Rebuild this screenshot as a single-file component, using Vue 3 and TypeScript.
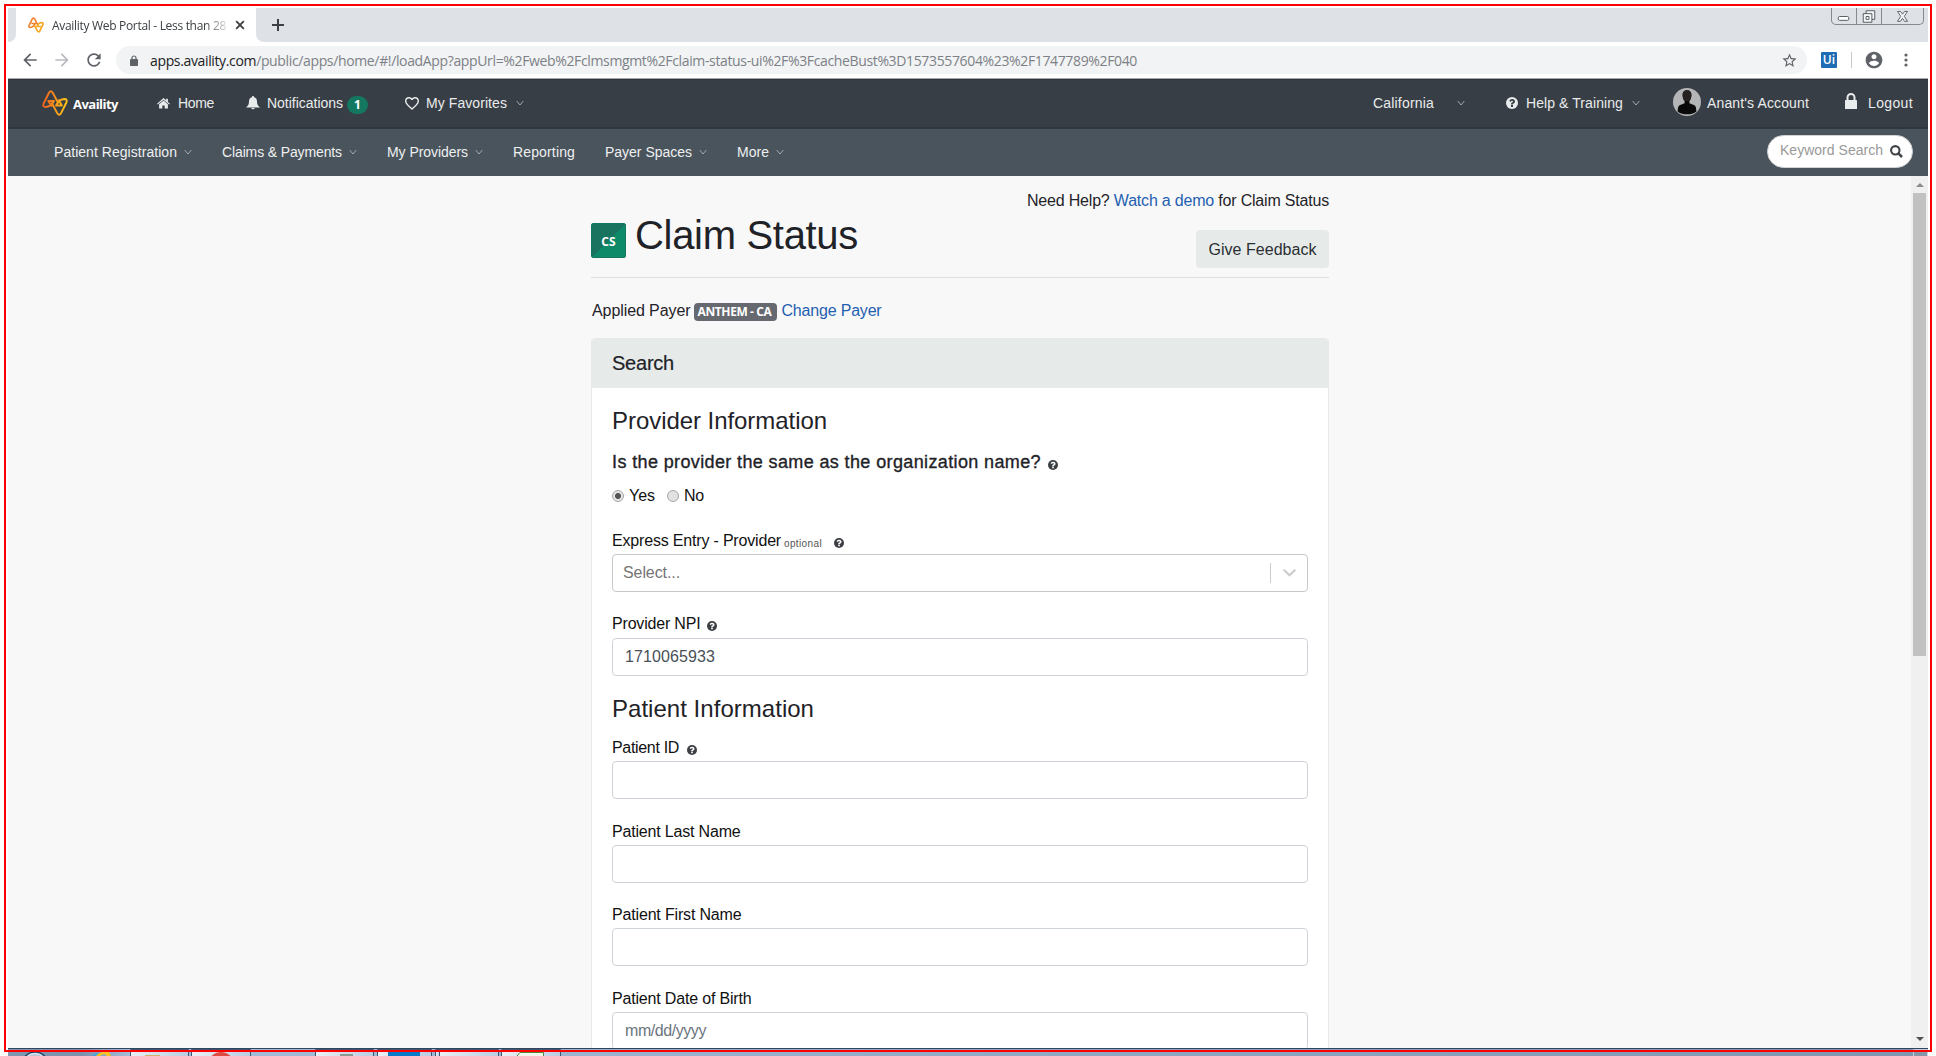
<script setup lang="ts">
import { ref } from 'vue'

interface NavItem {
  label: string
  width: number
  menu: boolean
}

interface Field {
  id: string
  label: string
  width: number
  gap: number
  placeholder?: string
  help?: boolean
}

const navItems: NavItem[] = [
  { label: 'Patient Registration', width: 123, menu: true },
  { label: 'Claims & Payments', width: 120, menu: true },
  { label: 'My Providers', width: 81, menu: true },
  { label: 'Reporting', width: 62, menu: false },
  { label: 'Payer Spaces', width: 87, menu: true },
  { label: 'More', width: 32, menu: true },
]

const patientFields: Field[] = [
  { id: 'pid', label: 'Patient ID', width: 67, gap: 13, help: true },
  { id: 'last', label: 'Patient Last Name', width: 128.5, gap: 21 },
  { id: 'first', label: 'Patient First Name', width: 129.5, gap: 20 },
  { id: 'dob', label: 'Patient Date of Birth', width: 139.5, gap: 21, placeholder: 'mm/dd/yyyy' },
]

const sameOrg = ref<'yes' | 'no'>('yes')

// Spreads a label's letters so that it fills the given width.
const vFit = {
  mounted(el: HTMLElement, binding: { value: number }) {
    const count = (el.textContent ?? '').trim().length
    const natural = el.getBoundingClientRect().width
    el.style.letterSpacing = `${((binding.value - natural) / count).toFixed(3)}px`
  },
}

const question =
  'M896 1376v-192q0-14-9-23t-23-9H672q-14 0-23 9t-9 23v192q0 14 9 23t23 9h192q14 0 23-9t9-23zM1152 704q0-88-55.500-163T958 425t-170-41q-243 0-371 213-15 24 8 42l132 100q7 6 19 6 16 0 25-12 53-68 86-92 34-24 86-24 48 0 85.500 26t37.500 59q0 38-20 61t-68 45q-63 28-115.500 86.500T640 1020v36q0 14 9 23t23 9h192q14 0 23-9t9-23q0-19 21.500-49.500T972 957q32-18 49-28.500t46-35 44.500-48 28-60.500 12.500-81z'
</script>

<template>
  <div class="screen">
    <div class="window">
      <div class="tabs">
        <div class="tab-lead"></div>
        <div class="tab">
          <svg class="favicon" viewBox="0 0 26 26" fill="none" stroke-width="2.6" stroke-linejoin="round">
            <path d="M4 17Q.5 17 1.800 13.500L7 3Q8.800 .4 10.800 3L16 13M4 17Q9 16.500 12 10.500H5.500" stroke="#f0812c" />
            <path d="M10 13L15.500 23Q17.200 25.400 19 23L24.300 12.500Q25.400 9 22 9Q17 9.500 14.500 15.500H21" stroke="#f6a51f" />
          </svg>
          <span class="tab-title"><span v-fit="174">Availity Web Portal - Less than 28</span></span>
          <svg class="tab-x" viewBox="0 0 10 10"><path d="M1.200 1.200l7.600 7.600M8.800 1.200L1.200 8.800" stroke="#3c4043" stroke-width="1.900" /></svg>
        </div>
        <div class="tab-rest">
          <svg class="plus" viewBox="0 0 12 12"><path d="M6 0v12M0 6h12" stroke="#3c4043" stroke-width="2" /></svg>
          <div class="controls">
            <svg viewBox="0 0 25 17" width="25"><rect x="6.500" y="8.500" width="11" height="4" rx="1.500" fill="#fff" stroke="#555a60" /></svg>
            <svg viewBox="0 0 25 17" width="25" fill="#f4f5f6" stroke="#555a60"><path d="M9.500 2.500h9v9h-9z" /><path d="M6.500 5.500h9v9h-9z" /><path d="M9.500 8.500h3v3h-3z" fill="#fff" /></svg>
            <svg viewBox="0 0 41 17" width="41"><path d="M15.500 3.500h3l2 2.700 2-2.700h3l-3.200 4.800 3.200 5h-3l-2-3-2 3h-3l3.200-5z" fill="#f4f5f6" stroke="#555a60" stroke-width=".9" /></svg>
          </div>
        </div>
      </div>

      <div class="toolbar">
        <svg class="i20 back" viewBox="0 0 24 24" fill="#5f6368"><path d="M20 11H7.830l5.590-5.590L12 4l-8 8 8 8 1.410-1.410L7.830 13H20v-2z" /></svg>
        <svg class="i20 forward" viewBox="0 0 24 24" fill="#b9bbbe"><path d="M4 13h12.170l-5.590 5.590L12 20l8-8-8-8-1.410 1.410L16.170 11H4v2z" /></svg>
        <svg class="i20 reload" viewBox="0 0 24 24" fill="#5f6368"><path d="M17.650 6.350C16.200 4.900 14.210 4 12 4c-4.420 0-7.990 3.580-7.990 8s3.570 8 7.990 8c3.730 0 6.840-2.550 7.730-6h-2.080c-.82 2.330-3.040 4-5.650 4-3.310 0-6-2.690-6-6s2.690-6 6-6c1.660 0 3.140.69 4.220 1.780L13 11h7V4l-2.350 2.350z" /></svg>
        <div class="omnibox">
          <svg class="url-lock" viewBox="0 0 8 11"><path d="M2 5V3a2 2 0 0 1 4 0v2" fill="none" stroke="#5f6368" stroke-width="1.200" /><rect y="4" width="8" height="7" rx=".8" fill="#5f6368" /></svg>
          <span class="url" v-fit="987"><b>apps.availity.com</b>/public/apps/home/#!/loadApp?appUrl=%2Fweb%2Fclmsmgmt%2Fclaim-status-ui%2F%3FcacheBust%3D1573557604%23%2F1747789%2F040</span>
          <svg class="star" viewBox="0 0 24 24" fill="#5f6368"><path d="M22 9.240l-7.190-.62L12 2 9.190 8.630 2 9.240l5.460 4.730L5.820 21 12 17.270 18.180 21l-1.630-7.030L22 9.240zM12 15.400l-3.760 2.270 1-4.280-3.320-2.880 4.380-.38L12 6.100l1.710 4.040 4.380.38-3.320 2.880 1 4.280L12 15.400z" /></svg>
        </div>
        <span class="ui">Ui</span>
        <span class="bar-sep"></span>
        <svg class="i20 account" viewBox="0 0 24 24" fill="#5f6368"><path d="M12 2C6.480 2 2 6.480 2 12s4.480 10 10 10 10-4.480 10-10S17.520 2 12 2zm0 3c1.660 0 3 1.340 3 3s-1.340 3-3 3-3-1.340-3-3 1.340-3 3-3zm0 14.200c-2.500 0-4.710-1.280-6-3.220.03-1.990 4-3.080 6-3.080 1.990 0 5.970 1.090 6 3.080-1.290 1.940-3.500 3.220-6 3.220z" /></svg>
        <svg class="kebab" viewBox="0 0 4 14" fill="#5f6368"><circle cx="2" cy="2" r="1.600" /><circle cx="2" cy="7" r="1.600" /><circle cx="2" cy="12" r="1.600" /></svg>
      </div>

      <header class="top">
        <svg class="logo" viewBox="0 0 26 26" fill="none" stroke-width="1.900" stroke-linejoin="round">
          <defs>
            <linearGradient id="la" x1="0" x2="1"><stop offset="0" stop-color="#f0641e" /><stop offset="1" stop-color="#f79a1c" /></linearGradient>
            <linearGradient id="lb" x1="0" x2="1"><stop offset="0" stop-color="#f58a1c" /><stop offset="1" stop-color="#fcc416" /></linearGradient>
          </defs>
          <path d="M3.500 17Q.4 17 1.600 13.500L7 2.800Q8.800 -.2 10.700 2.800L16.500 13.500M3.500 17Q9 16.800 12 11H6.200L10 16.500" stroke="url(#la)" />
          <path d="M9.500 12.500L15.300 23.200Q17.200 26.200 19 23.200L24.400 12.500Q25.600 9 22.500 9Q17 9.200 14 15.500H19.800L16.500 9.500" stroke="url(#lb)" />
        </svg>
        <span class="brand"><span v-fit="45">Availity</span></span>
        <svg class="home" viewBox="0 0 14 12" fill="#e9ecec"><path d="M7 0L0 6.200l.8.9L7 1.800l6.200 5.300.8-.9-2.200-1.900V.8H9.900v1.700z" /><path d="M7 2.800L2.200 6.900V11.500H5.700V8.200h2.600v3.300h3.500V6.900z" /></svg>
        <span class="t" v-fit="36">Home</span>
        <svg class="bell" viewBox="0 0 14 14" fill="#e9ecec"><path d="M7 0a1 1 0 0 0-1 1.200C3.800 1.700 3 3.500 3 5.500 3 8.500 2 10 0 11.400h14C12 10 11 8.500 11 5.500c0-2-.8-3.800-3-4.300A1 1 0 0 0 7 0zM5.200 12a1.900 1.900 0 0 0 3.600 0z" /></svg>
        <span class="t" v-fit="76">Notifications</span>
        <span class="count">1</span>
        <svg class="heart" viewBox="2 3 20 18.400" fill="#e9ecec"><path d="M16.500 3c-1.740 0-3.410.81-4.500 2.090C10.910 3.810 9.240 3 7.500 3 4.420 3 2 5.420 2 8.500c0 3.780 3.400 6.860 8.550 11.540L12 21.350l1.450-1.320C18.600 15.360 22 12.280 22 8.500 22 5.420 19.580 3 16.500 3zm-4.400 15.550l-.1.100-.1-.100C7.140 14.240 4 11.390 4 8.500 4 6.500 5.500 5 7.500 5c1.540 0 3.040.99 3.570 2.360h1.870C13.460 5.990 14.960 5 16.500 5c2 0 3.500 1.500 3.500 3.500 0 2.890-3.140 5.740-7.900 10.050z" /></svg>
        <span class="t" v-fit="81">My Favorites</span>
        <svg class="chev" viewBox="0 0 8 6"><path d="M.7 1L4 5l3.300-4" /></svg>
        <div class="grow"></div>
        <span class="t" v-fit="61">California</span>
        <svg class="chev wide" viewBox="0 0 8 6"><path d="M.7 1L4 5l3.300-4" /></svg>
        <svg class="help-top" viewBox="0 0 1536 1536"><circle cx="768" cy="768" r="768" fill="#e9ecec" /><path :d="question" transform="translate(0 -128)" fill="#383e45" /></svg>
        <span class="t" v-fit="97">Help &amp; Training</span>
        <svg class="chev" viewBox="0 0 8 6"><path d="M.7 1L4 5l3.300-4" /></svg>
        <svg class="avatar" viewBox="0 0 28 28"><circle cx="14" cy="14" r="14" fill="#b4b5b6" /><path d="M14 2.300c3 0 4.600 2 4.400 5-.1 2.500-1 4.600-2 5.800v2.200l5.100 2c1.400.7 1.800 3.500 1.900 6.200C20.500 26 17.500 26.200 14 26.200S7.500 26 4.600 23.500c.1-2.700.5-5.500 1.900-6.200l5.100-2v-2.200c-1-1.200-1.900-3.300-2-5.800-.2-3 1.400-5 4.400-5z" fill="#0b0a0b" /><path d="M14 2.300c3 0 4.600 2 4.400 5-.1 2.500-1 4.600-2 5.800h-4.800c-1-1.200-1.900-3.300-2-5.800-.2-3 1.400-5 4.400-5z" fill="#262021" /></svg>
        <span class="t" v-fit="102">Anant's Account</span>
        <svg class="lock" viewBox="0 0 12 16"><path d="M2.500 8V4.500a3.500 3.500 0 0 1 7 0V8" fill="none" stroke="#e9ecec" stroke-width="2" /><rect y="7" width="12" height="9" rx=".6" fill="#e9ecec" /></svg>
        <span class="t last" v-fit="45">Logout</span>
      </header>

      <nav class="nav">
        <div v-for="n in navItems" :key="n.label" class="nav-item">
          <span class="t" v-fit="n.width">{{ n.label }}</span>
          <svg v-if="n.menu" class="chev" viewBox="0 0 8 6"><path d="M.7 1L4 5l3.300-4" /></svg>
        </div>
        <div class="grow"></div>
        <div class="search">
          <span v-fit="103">Keyword Search</span>
          <svg viewBox="0 0 13 13"><circle cx="5.300" cy="5.300" r="4.200" fill="none" stroke="#3f4347" stroke-width="2.100" /><path d="M8.400 8.400l3.600 3.600" stroke="#3f4347" stroke-width="2.500" /></svg>
        </div>
      </nav>

      <div class="body">
        <main class="main">
          <p class="demo"><span v-fit="302">Need Help? <a>Watch a demo</a> for Claim Status</span></p>
          <div class="title-row">
            <span class="cs">CS</span>
            <h1><span v-fit="223">Claim Status</span></h1>
            <button class="feedback"><span v-fit="108">Give Feedback</span></button>
          </div>
          <p class="payer">
            <span v-fit="98.500">Applied Payer</span>
            <span class="tag"><span v-fit="74">ANTHEM - CA</span></span>
            <a v-fit="100">Change Payer</a>
          </p>

          <section class="card">
            <div class="card-head"><span v-fit="62">Search</span></div>
            <div class="card-body">
              <h2><span v-fit="215">Provider Information</span></h2>
              <div class="question">
                <span v-fit="429">Is the provider the same as the organization name?</span>
                <svg class="help q" viewBox="0 0 1536 1536"><circle cx="768" cy="768" r="768" /><path :d="question" transform="translate(0 -128)" fill="#fff" /></svg>
              </div>
              <div class="radios">
                <i class="radio" :class="{ on: sameOrg === 'yes' }" @click="sameOrg = 'yes'"></i><span class="yes" v-fit="26">Yes</span>
                <i class="radio" :class="{ on: sameOrg === 'no' }" @click="sameOrg = 'no'"></i><span v-fit="20">No</span>
              </div>
              <label class="label express">
                <span v-fit="169">Express Entry - Provider</span>
                <small v-fit="38">optional</small>
                <svg class="help" viewBox="0 0 1536 1536"><circle cx="768" cy="768" r="768" /><path :d="question" transform="translate(0 -128)" fill="#fff" /></svg>
              </label>
              <div class="select">
                <span v-fit="57">Select...</span>
                <i></i>
                <svg viewBox="0 0 13 8"><path d="M1.300 1.300l5.200 4.900 5.200-4.900" fill="none" stroke="#ccc" stroke-width="2.200" stroke-linecap="round" /></svg>
              </div>
              <label class="label npi">
                <span v-fit="88.500">Provider NPI</span>
                <svg class="help" viewBox="0 0 1536 1536"><circle cx="768" cy="768" r="768" /><path :d="question" transform="translate(0 -128)" fill="#fff" /></svg>
              </label>
              <div class="input"><span v-fit="90">1710065933</span></div>
              <h2 class="patient"><span v-fit="202">Patient Information</span></h2>
              <div v-for="f in patientFields" :key="f.id" class="field" :style="{ paddingTop: f.gap + 'px' }">
                <label class="label">
                  <span v-fit="f.width">{{ f.label }}</span>
                  <svg v-if="f.help" class="help" viewBox="0 0 1536 1536"><circle cx="768" cy="768" r="768" /><path :d="question" transform="translate(0 -128)" fill="#fff" /></svg>
                </label>
                <div class="input"><span v-if="f.placeholder" class="ph" v-fit="81">{{ f.placeholder }}</span></div>
              </div>
            </div>
          </section>
        </main>
        <div class="scrollbar">
          <i class="arrow up"></i>
          <i class="thumb"></i>
          <i class="arrow down"></i>
        </div>
      </div>

      <div class="taskbar">
        <svg viewBox="8 1049 1920 7" width="1920" height="7">
          <defs>
            <linearGradient id="tb" x1="0" x2="1"><stop offset="0" stop-color="#7f97b0" /><stop offset=".6" stop-color="#7d91ab" /><stop offset="1" stop-color="#a3bdda" /></linearGradient>
            <linearGradient id="tr" x1="0" x2="1"><stop offset="0" stop-color="#a5c0de" /><stop offset="1" stop-color="#8095b0" /></linearGradient>
            <linearGradient id="bt" x1="0" x2="1"><stop offset="0" stop-color="#eaf0f6" /><stop offset="1" stop-color="#b9cce2" /></linearGradient>
          </defs>
          <path d="M8 1049h1920v7H8z" fill="url(#tr)" />
          <path d="M8 1049h122v7H8z" fill="url(#tb)" />
          <circle cx="35" cy="1065" r="13" fill="#b5c8d8" stroke="#24466b" stroke-width="1.400" />
          <circle cx="35" cy="1065" r="11.500" fill="none" stroke="#e9f2f8" />
          <path d="M95 1056q6-5 14-4l2 4h-4l-2-2q-3 0-5 2z" fill="#fbc31d" />
          <path d="M91 1056q4-3 9-4l-4 4z" fill="#4aa0dc" />
          <g fill="url(#bt)" stroke="#3e5570">
            <path d="M130.500 1049.500h58v8h-58z" /><path d="M191.500 1049.500h59v8h-59z" /><path d="M315.500 1049.500h58v8h-58z" /><path d="M377.500 1049.500h54v8h-54z" /><path d="M435.500 1049.500h4v8h-4z" /><path d="M439.500 1049.500h59v8h-59z" /><path d="M501.500 1049.500h59v8h-59z" />
          </g>
          <path d="M145 1055h15v1h-15z" fill="#d1b36a" />
          <circle cx="221" cy="1065" r="13" fill="#df4b40" />
          <path d="M340 1054h13v2h-13z" fill="#8d9a90" />
          <path d="M388 1052h32v4h-32z" fill="#0a79c8" />
          <path d="M517 1056l3-3.500h23.500v4" fill="#f2f7ee" stroke="#4c8a3c" />
          <path d="M1913.500 1049.500h14v8h-14z" fill="#8795a8" stroke="#c6cfda" />
        </svg>
      </div>
    </div>
    <div class="frame"></div>
  </div>
</template>

<style>
html, body { margin: 0; background: #fff; overflow: hidden; }
</style>

<style scoped>
* { box-sizing: border-box; }
.screen { position: relative; width: 1936px; height: 1056px; overflow: hidden; background: #fff; font-family: "Liberation Sans", Arial, sans-serif; color: #1f2328; }
.frame { position: absolute; left: 4px; top: 4px; width: 1928px; height: 1048px; border: 2px solid #f00; pointer-events: none; }
.window { margin: 0 8px; padding-top: 8px; height: 1056px; display: flex; flex-direction: column; }
svg { display: block; flex: none; }
span, a { white-space: nowrap; flex: none; }
.grow { flex: 1; }

.tabs { height: 34px; display: flex; flex: none; background: linear-gradient(90deg, #fff 300px, #dee1e6 300px); }
.tab-lead { width: 8px; background: #dee1e6; border-bottom-right-radius: 8px; }
.tab { width: 240px; background: #fff; display: flex; align-items: center; padding-left: 12px; }
.favicon { width: 16px; height: 16px; }
.tab-title { width: 174px; margin-left: 8px; font: 12px "Open Sans", "Noto Sans", sans-serif; color: #3c4043; -webkit-mask-image: linear-gradient(90deg, #000 88%, transparent 103%); mask-image: linear-gradient(90deg, #000 88%, transparent 103%); }
.tab-x { width: 10px; height: 10px; margin-left: 9px; }
.tab-rest { flex: 1; background: #dee1e6; border-bottom-left-radius: 8px; display: flex; justify-content: space-between; align-items: flex-start; }
.plus { width: 12px; height: 12px; margin: 11px 0 0 16px; }
.controls { display: flex; height: 17px; width: 93px; margin-right: 4px; border: 1px solid #85888d; border-top: 0; border-radius: 0 0 5px 5px; overflow: hidden; }
.controls svg { height: 17px; border-right: 1px solid #85888d; }
.controls svg:last-child { border: 0; }

.toolbar { height: 37px; flex: none; display: flex; align-items: center; border-bottom: 1px solid #a9a9ac; background: #fff; }
.i20 { width: 20px; height: 20px; }
.back { margin-left: 12px; }
.forward { margin-left: 12px; }
.reload { margin-left: 12px; }
.omnibox { width: 1691px; height: 28px; margin-left: 12px; border-radius: 14px; background: #f1f3f4; display: flex; align-items: center; padding-left: 14px; }
.url-lock { width: 8px; height: 11px; }
.url { margin-left: 12px; font: 14px "Open Sans", "Noto Sans", sans-serif; color: #7d8187; }
.url b { font-weight: 400; color: #202124; }
.star { width: 17px; height: 17px; margin-left: 644px; }
.ui { width: 16px; height: 16px; margin-left: 14px; background: #1f6cb5; border-radius: 1px; color: #fff; font: 600 12px/15px "Open Sans", sans-serif; text-align: center; }
.bar-sep { width: 1px; height: 16px; margin-left: 14px; background: #c5c8cc; }
.account { margin-left: 12px; }
.kebab { width: 4px; height: 14px; margin-left: 20px; }

.top { height: 50px; flex: none; display: flex; align-items: center; background: #383e45; border-bottom: 2px solid #30383f; color: #e9ecec; font-size: 14px; box-shadow: inset 0 1px 0 #2f353b; }
.logo { width: 26px; height: 26px; margin-left: 34px; }
.brand { width: 46px; margin-left: 5px; font: 700 13px/18px "Open Sans", sans-serif; color: #fff; margin-top: 1px; }
.home { width: 13px; height: 11px; margin-left: 38px; }
.home + .t { margin-left: 8px; }
.bell { width: 14px; height: 14px; margin-left: 32px; }
.bell + .t { margin-left: 7px; }
.count { width: 21px; height: 18px; margin: 4px 0 0 4px; border-radius: 9px; background: #14775f; color: #fff; font: 700 12px/18px "Open Sans", sans-serif; text-align: center; }
.heart { width: 14px; height: 13px; margin-left: 37px; }
.heart + .t { margin-left: 7px; }
.chev { width: 8px; height: 6px; margin-left: 9px; fill: none; stroke: #a3a9ad; stroke-width: 1; }
.chev.wide { margin-left: 23px; }
.help-top { width: 12px; height: 12px; margin-left: 41px; }
.help-top + .t { margin-left: 8px; }
.avatar { width: 28px; height: 28px; margin-left: 33px; margin-top: -2px; }
.avatar + .t { margin-left: 6px; }
.lock { width: 12px; height: 16px; margin-left: 36px; margin-top: -4px; }
.lock + .t { margin-left: 11px; }
.last { margin-right: 15px; }

.nav { height: 47px; flex: none; display: flex; align-items: center; background: #4a545c; color: #eef0f1; font-size: 14px; padding: 0 0 2px 46px; }
.nav-item { display: flex; align-items: center; margin-right: 30px; }
.nav .chev { margin: 1px 0 0 7px; }
.search { width: 146px; height: 33px; margin: -1px 15px 0 0; border-radius: 17px; background: #fff; border: 1px solid #d0d3d5; display: flex; align-items: center; padding-left: 12px; color: #999; }
.search span { margin-top: -2px; }
.search svg { width: 13px; height: 13px; margin-left: 7px; }

.body { height: 872px; flex: none; display: flex; background: #f8f8f8; overflow: hidden; }
.main { width: 738px; margin-left: 583px; margin-right: 582px; flex: none; font-size: 16px; }
p, h1, h2 { margin: 0; font-weight: 400; }
a { color: #2460b0; }
.demo { height: 23px; line-height: 24px; margin-top: 13px; text-align: right; }
.title-row { display: flex; align-items: flex-start; height: 66px; border-bottom: 1px solid #dcdedf; }
.cs { width: 35px; height: 35px; margin-top: 11px; border-radius: 2px; border: 1px solid #14775f; background: linear-gradient(135deg, #19735f 50%, #0f8a68 50%); color: #fff; font: 700 12px/36px "Open Sans", sans-serif; text-align: center; }
h1 { font-size: 40px; line-height: 48px; margin-left: 9px; margin-top: -1px; flex: 1; }
.feedback { width: 133px; height: 38px; margin-top: 18px; padding: 1px 0 0; border: 0; border-radius: 4px; background: #e6ebea; font: 16px "Liberation Sans", Arial, sans-serif; color: #2b2f33; }
.payer { display: flex; align-items: center; height: 24px; margin-top: 21px; padding-left: 1px; }
.tag { width: 83px; height: 18px; margin: 2px 0 0 3px; padding-left: 4px; border-radius: 4px; background: #66696f; color: #fff; font: 700 12px/18px "Open Sans", sans-serif; }
.payer a { margin-left: 5px; }

.card { margin-top: 15px; height: 800px; border: 1px solid #e6e9e9; border-radius: 4px; background: #fff; }
.card-head { height: 49px; line-height: 48px; padding-left: 20px; background: #e6ebea; border-radius: 3px 3px 0 0; font-size: 20px; -webkit-text-stroke: .2px #1f2328; }
.card-body { padding: 18px 20px 0; }
h2 { height: 29px; font-size: 24px; line-height: 29px; }
.question { display: flex; align-items: center; height: 22px; margin-top: 16px; font-size: 18px; -webkit-text-stroke: .35px #1f2328; }
.help { width: 10px; height: 10px; margin: 3px 0 0 8px; fill: #3c3f43; }
.question .help { margin: 5px 0 0 7px; -webkit-text-stroke: 0; }
.radios { display: flex; align-items: center; height: 24px; margin-top: 11px; color: #111; }
.radio { width: 12px; height: 12px; margin-right: 5px; border: 1px solid #a5a5a5; border-radius: 50%; background: #e2e2e2; }
.radio.on { background: radial-gradient(circle, #555 0 2.6px, #e6e6e6 3.4px); }
.yes { margin-right: 12px; }
.label { display: flex; align-items: center; height: 24px; margin-bottom: 1px; color: #111; }
.express { margin-top: 21px; margin-bottom: 1px; }
.express small { font-size: 10px; margin: 5px 0 0 3px; color: #555; white-space: nowrap; }
.express .help { margin-left: 12px; }
.npi { margin-top: 20px; margin-bottom: 2px; }
.npi .help { margin-left: 6px; }
.select { height: 38px; border: 1px solid #c8c8c8; border-radius: 4px; display: flex; align-items: center; padding-left: 10px; color: #757575; }
.select i { width: 1px; height: 20px; margin-left: auto; background: #ccc; }
.select svg { width: 13px; height: 8px; margin: 0 11px 0 12px; }
.input { height: 38px; border: 1px solid #ced4da; border-radius: 4px; padding-left: 12px; line-height: 36px; color: #495057; }
.input .ph { color: #6c757d; }
.patient { margin-top: 18px; }

.scrollbar { width: 17px; background: #f0f0f0; display: flex; flex-direction: column; align-items: center; padding: 7px 0; }
.thumb { width: 13px; height: 463px; margin-top: 6px; background: #c1c1c1; }
.arrow { border: 4px solid transparent; width: 0; height: 4px; }
.up { border-bottom: 4px solid #8b8b8b; border-top: 0; }
.down { border-top-color: #505050; border-bottom: 0; margin-top: auto; }

.taskbar { height: 8px; flex: none; border-top: 1px solid #2f4560; overflow: hidden; }
</style>
